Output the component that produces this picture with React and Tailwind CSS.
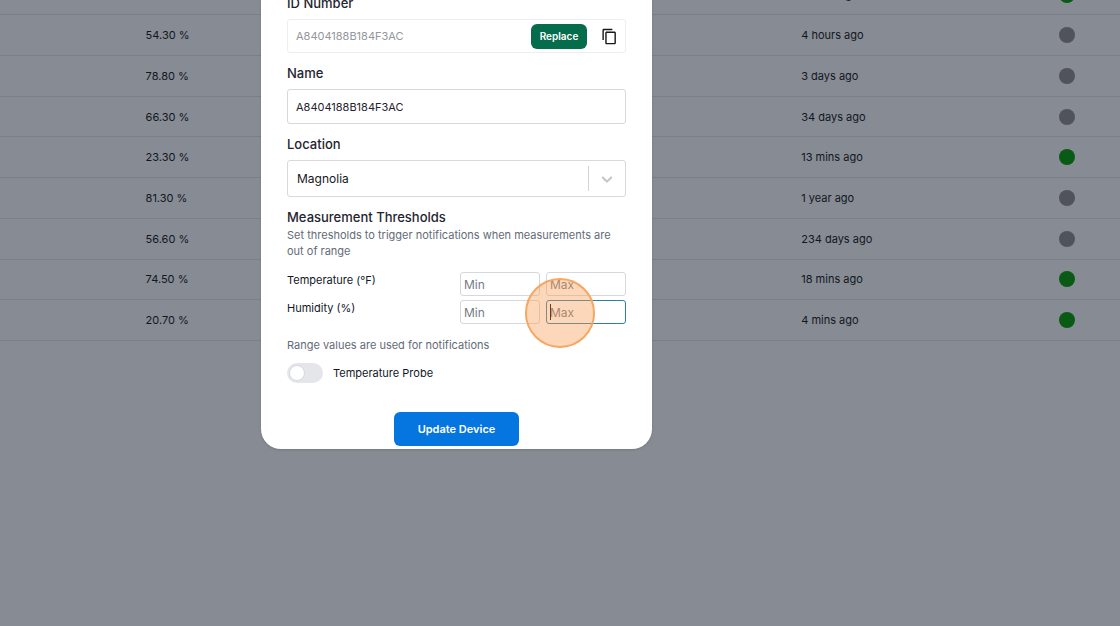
import React, { useState } from 'react';
import { MdContentCopy } from 'react-icons/md';

const devices = [
    { humidity: '61.20 %', updated: '9 mins ago', online: true },
    { humidity: '54.30 %', updated: '4 hours ago', online: false },
    { humidity: '78.80 %', updated: '3 days ago', online: false },
    { humidity: '66.30 %', updated: '34 days ago', online: false },
    { humidity: '23.30 %', updated: '13 mins ago', online: true },
    { humidity: '81.30 %', updated: '1 year ago', online: false },
    { humidity: '56.60 %', updated: '234 days ago', online: false },
    { humidity: '74.50 %', updated: '18 mins ago', online: true },
    { humidity: '20.70 %', updated: '4 mins ago', online: true },
];

/**
 * DeviceTable Component
 * List of devices behind the dialog, already dimmed
 */
function DeviceTable() {
    return (
        <table className="-mt-[25px] h-[366px] w-full table-fixed border-collapse text-[11px] leading-5 text-[#12171f]">
            <tbody>
                {devices.map((device) => (
                    <tr key={device.humidity} className="border-b border-[#7b7f87]">
                        <td className="w-[13%]"></td>
                        <td>{device.humidity}</td>
                        <td className="w-[19%] whitespace-nowrap">{device.updated}</td>
                        <td className="w-[106px] pr-[45px]">
                            <span
                                role="img"
                                aria-label={device.online ? 'Online' : 'Offline'}
                                className={`ml-auto block size-4 rounded-full ${device.online ? 'bg-[#095a14]' : 'bg-[#50535c]'}`}
                            ></span>
                        </td>
                    </tr>
                ))}
            </tbody>
        </table>
    );
}

/**
 * RangeRow Component
 * Label with min and max inputs
 *
 * Props:
 * - label: measurement name with its unit
 * - active: marks the max input as the one being edited
 */
function RangeRow({ label, active }) {
    const inputClass = 'h-6 w-20 rounded-[3px] border px-[3px] text-[12px] placeholder:text-[#757b86] outline-none';

    return (
        <div className="flex items-start justify-between">
            <span className="text-[11px] leading-4 text-[#111827]">{label}</span>
            <div className="flex gap-1.5">
                <input aria-label={`${label} min`} placeholder="Min" className={`${inputClass} border-[#d5d8dc]`} />
                <div className="relative flex">
                    <input
                        aria-label={`${label} max`}
                        placeholder="Max"
                        className={`${inputClass} ${active ? 'border-[#2f7fa8]' : 'border-[#d5d8dc]'}`}
                    />
                    {active && (
                        <>
                            {/* Caret and click highlight */}
                            <span className="absolute left-1 top-1 h-4 w-px bg-black"></span>
                            <span className="pointer-events-none absolute -left-[21px] -top-[22px] size-[70px] rounded-full border-2 border-[#f5a763] bg-[#f99a4f]/40"></span>
                        </>
                    )}
                </div>
            </div>
        </div>
    );
}

function DeviceDialog() {
    const [name, setName] = useState('A8404188B184F3AC');
    const [probe, setProbe] = useState(false);
    const labelClass = 'block text-[13px] font-medium leading-5 text-[#1f2430]';

    return (
        <form
            role="dialog"
            aria-label="Update device"
            onSubmit={(e) => e.preventDefault()}
            className="-mt-8 w-[391px] rounded-[20px] bg-white px-[26px] pb-[3px] pt-[25px] shadow"
        >
            {/* ID number */}
            <label htmlFor="device-id" className={labelClass}>ID Number</label>
            <div className="mt-1.5 flex h-[34px] items-center rounded-[3px] border border-[#eceef0] px-[7px]">
                <input
                    id="device-id"
                    disabled
                    value="A8404188B184F3AC"
                    className="min-w-0 flex-1 px-px text-[11px] text-[#94979c]"
                />
                <button type="button" className="h-[25px] w-14 rounded-md bg-[#056d4b] text-[10px] font-semibold text-white">
                    Replace
                </button>
                <button type="button" aria-label="Copy ID" className="ml-3.5 text-[#16181c]">
                    <MdContentCopy className="size-[17px]" />
                </button>
            </div>

            {/* Name */}
            <label htmlFor="device-name" className={`${labelClass} mt-2.5`}>Name</label>
            <input
                id="device-name"
                value={name}
                onChange={(e) => setName(e.target.value)}
                className="mt-1.5 block h-[35px] w-full rounded-[3px] border border-[#d5d8dc] px-2 text-[11px] text-[#1f2430]"
            />

            {/* Location */}
            <label htmlFor="device-location" className={`${labelClass} mt-2.5`}>Location</label>
            <div className="relative mt-1.5">
                <select
                    id="device-location"
                    className="block h-[37px] w-full appearance-none rounded-[3px] border border-[#d5dadb] px-[9px] text-[12px] text-[#16181c]"
                >
                    <option>Magnolia</option>
                </select>
                <div className="pointer-events-none absolute inset-y-0 right-0 flex w-[38px] items-center justify-center">
                    <span className="absolute inset-y-1.5 left-0 w-px bg-[#d2d4d6]"></span>
                    <svg className="size-[18px]" viewBox="0 0 20 20" fill="#c4c4c4">
                        <path d="M4.516 7.548c0.436-0.446 1.043-0.481 1.576 0l3.908 3.747 3.908-3.747c0.533-0.481 1.141-0.446 1.574 0 0.436 0.445 0.408 1.197 0 1.615-0.406 0.418-4.695 4.502-4.695 4.502-0.217 0.223-0.502 0.335-0.787 0.335s-0.57-0.112-0.789-0.335c0 0-4.287-4.084-4.695-4.502s-0.436-1.17 0-1.615z" />
                    </svg>
                </div>
            </div>

            {/* Thresholds */}
            <h2 className={`${labelClass} mt-2.5`}>Measurement Thresholds</h2>
            <p className="text-[11px] leading-4 text-[#646b78]">
                Set thresholds to trigger notifications when measurements are out of range
            </p>
            <div className="mt-[13px] flex flex-col gap-1">
                <RangeRow label="Temperature (°F)" />
                <RangeRow label="Humidity (%)" active />
            </div>
            <p className="mt-[13px] text-[11px] leading-4 text-[#646b78]">Range values are used for notifications</p>

            {/* Probe switch */}
            <label className="mt-2.5 flex items-center text-[11px] leading-5 text-[#111827]">
                <input
                    type="checkbox"
                    role="switch"
                    checked={probe}
                    onChange={() => setProbe(!probe)}
                    className="peer sr-only"
                />
                <span className="mr-2.5 flex h-5 w-9 items-center rounded-full bg-[#e4e6ea] px-0.5 peer-checked:justify-end peer-checked:bg-blue-600">
                    <span className="size-4 rounded-full border border-[#d7dade] bg-white"></span>
                </span>
                Temperature Probe
            </label>

            <button type="submit" className="mx-auto mt-[29px] block h-[34px] w-[125px] rounded-md bg-[#0575e0] text-[11px] font-semibold text-white">
                Update Device
            </button>
        </form>
    );
}

function App() {
    return (
        <div className="relative min-h-screen overflow-hidden bg-[#878b93] font-['Inter',sans-serif]">
            <DeviceTable />
            {/* Dialog layer */}
            <div className="absolute inset-0 flex items-start pl-[261px]">
                <DeviceDialog />
            </div>
        </div>
    );
}

export default App;
